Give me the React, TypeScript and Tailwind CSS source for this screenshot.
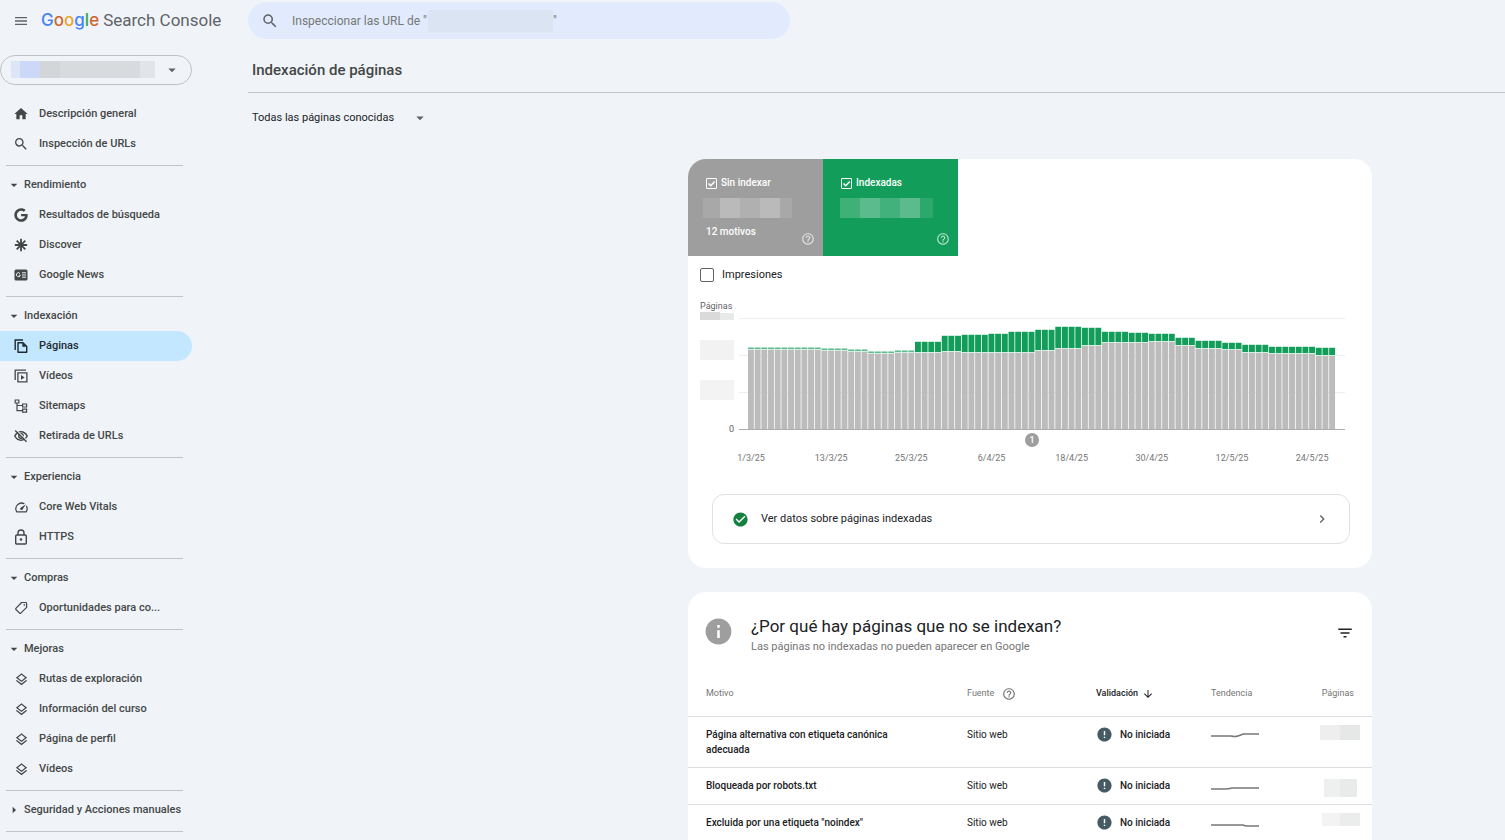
import type { ReactNode } from 'react';
import { FaGoogle } from 'react-icons/fa';
import {
  MdArrowDownward,
  MdArrowDropDown,
  MdArrowRight,
  MdCheckCircle,
  MdChevronRight,
  MdError,
  MdFilterList,
  MdHelpOutline,
  MdHome,
  MdInfo,
  MdMenu,
  MdOutlineLayers,
  MdOutlineSpeed,
  MdSearch,
} from 'react-icons/md';

function Svg({ children }: { children: ReactNode }) {
  return (
    <svg
      viewBox="0 0 14 14"
      className="size-[14px]"
      fill="none"
      stroke="currentColor"
      strokeWidth="1.3"
      aria-hidden="true"
    >
      {children}
    </svg>
  );
}

const DiscoverIcon = () => (
  <Svg>
    <path d="M7 .8v12.4M.8 7h12.4M2.7 2.7l8.6 8.6M11.3 2.7l-8.6 8.6" strokeWidth="1.8" />
  </Svg>
);

const NewsIcon = () => (
  <Svg>
    <rect x=".5" y="1.5" width="13" height="11" rx="1.5" fill="currentColor" stroke="none" />
    <path d="M6 5.6a2 2 0 1 0 .3 1.6H4.8M8 4.8h4M8 7h4M8 9.2h4" stroke="#f0f4f9" strokeWidth="1" />
  </Svg>
);

const PagesIcon = () => (
  <Svg>
    <path d="M1.2 11V1H9" strokeWidth="1.4" />
    <path d="M4 3.8h5l3.7 3.7v5.7H4z" strokeWidth="1.4" strokeLinejoin="round" />
    <path d="M8.3 3.8v4h4z" fill="currentColor" stroke="none" />
  </Svg>
);

const VideosIcon = () => (
  <Svg>
    <path d="M1.2 11V1.2H12M3.9 3.9h9v9h-9z" />
    <path d="M7 6l3.6 2.4L7 10.8z" fill="currentColor" stroke="none" />
  </Svg>
);

const SitemapIcon = () => (
  <Svg>
    <path d="M1.2 1h3.6v3H1.2zM8.6 5h4v3h-4zM8.6 10.2h4v3h-4zM3 4v7.7h5.6M3 6.5h5.6" strokeWidth="1.2" />
  </Svg>
);

const HiddenIcon = () => (
  <Svg>
    <path d="M.8 7Q3 2.8 7 2.8T13.2 7Q11 11.2 7 11.2T.8 7z" strokeWidth="1.5" />
    <circle cx="7" cy="7" r="2.2" strokeWidth="1.4" />
    <path d="M2.2.8l11 11" stroke="#f0f4f9" strokeWidth="1.2" />
    <path d="M1.2 1.4l11.4 11.4" strokeWidth="1.4" />
  </Svg>
);

const LockIcon = () => (
  <svg
    viewBox="0 0 14 16"
    className="h-4 w-[14px]"
    fill="none"
    stroke="currentColor"
    strokeWidth="1.4"
    aria-hidden="true"
  >
    <rect x="1.7" y="6" width="10.6" height="9" rx="1" />
    <path d="M4 6V4a3 3 0 0 1 6 0v2" />
    <circle cx="7" cy="10.5" r="1.3" fill="currentColor" stroke="none" />
  </svg>
);

const TagIcon = () => (
  <Svg>
    <path
      d="M7.6 1.5h4.2q.8 0 .8.8v4.1L6.8 12.2q-.6.5-1.2 0L1.9 8.5q-.5-.6 0-1.2z"
      strokeLinejoin="round"
      strokeWidth="1.2"
    />
    <circle cx="10.3" cy="3.9" r=".8" fill="currentColor" stroke="none" />
  </Svg>
);

type Item = { label: string; icon: ReactNode; active?: boolean };
type Group = { title?: string; closed?: boolean; items: Item[] };

const layers = <MdOutlineLayers className="size-[15px]" />;

const GROUPS: Group[] = [
  {
    items: [
      { label: 'Descripción general', icon: <MdHome className="size-4" /> },
      { label: 'Inspección de URLs', icon: <MdSearch className="size-4" /> },
    ],
  },
  {
    title: 'Rendimiento',
    items: [
      { label: 'Resultados de búsqueda', icon: <FaGoogle className="size-[14px]" /> },
      { label: 'Discover', icon: <DiscoverIcon /> },
      { label: 'Google News', icon: <NewsIcon /> },
    ],
  },
  {
    title: 'Indexación',
    items: [
      { label: 'Páginas', icon: <PagesIcon />, active: true },
      { label: 'Vídeos', icon: <VideosIcon /> },
      { label: 'Sitemaps', icon: <SitemapIcon /> },
      { label: 'Retirada de URLs', icon: <HiddenIcon /> },
    ],
  },
  {
    title: 'Experiencia',
    items: [
      { label: 'Core Web Vitals', icon: <MdOutlineSpeed className="size-[15px]" /> },
      { label: 'HTTPS', icon: <LockIcon /> },
    ],
  },
  {
    title: 'Compras',
    items: [{ label: 'Oportunidades para co...', icon: <TagIcon /> }],
  },
  {
    title: 'Mejoras',
    items: [
      { label: 'Rutas de exploración', icon: layers },
      { label: 'Información del curso', icon: layers },
      { label: 'Página de perfil', icon: layers },
      { label: 'Vídeos', icon: layers },
    ],
  },
  { title: 'Seguridad y Acciones manuales', closed: true, items: [] },
];

function Sidebar() {
  return (
    <aside className="w-[248px] shrink-0">
      <div className="flex h-[41px] items-center pl-[13px]">
        <button aria-label="Menú principal" className="text-[#5f6368]">
          <MdMenu className="size-4" />
        </button>
        <a href="#inicio" className="ml-3 flex items-center gap-1 text-[17px] text-[#5f6368]">
          <span className="font-['Inter',sans-serif] font-medium">
            <span className="text-[#4285f4]">G</span>
            <span className="text-[#d0662b]">o</span>
            <span className="text-[#eaa62c]">o</span>
            <span className="text-[#4285f4]">g</span>
            <span className="text-[#34a853]">l</span>
            <span className="text-[#d0662b]">e</span>
          </span>
          Search Console
        </a>
      </div>

      <button
        aria-label="Seleccionar propiedad"
        className="mt-[14px] flex h-[30px] w-48 items-center justify-between rounded-full border border-[#bfc2c4] px-[10px]"
      >
        <span className="mb-[2px] flex h-[17px]">
          <span className="w-[9px] bg-[#dde6f6]" />
          <span className="w-5 bg-[#cbd8f8]" />
          <span className="w-5 bg-[#d3d6d8]" />
          <span className="w-20 bg-[#d8dbde]" />
          <span className="w-[15px] bg-[#e1e4e8]" />
        </span>
        <MdArrowDropDown className="size-[18px] text-[#5f6368]" />
      </button>

      <nav className="mt-[14px] text-[11px] font-medium text-[#444746]">
        {GROUPS.map((g, i) => (
          <div key={i}>
            {g.title && (
              <button className="flex h-[30px] items-center pl-[6px] whitespace-nowrap">
                {g.closed ? (
                  <MdArrowRight className="size-4" />
                ) : (
                  <MdArrowDropDown className="size-4" />
                )}
                <span className="ml-[2px]">{g.title}</span>
              </button>
            )}
            {g.items.map((item) => (
              <a
                key={item.label}
                href="#seccion"
                className={
                  item.active
                    ? 'flex h-[30px] w-48 items-center rounded-r-full bg-[#c2e7ff] pl-[13px] text-[#1f2a30]'
                    : 'flex h-[30px] w-48 items-center pl-[13px]'
                }
              >
                <span className="flex w-4 justify-center">{item.icon}</span>
                <span className="ml-[10px] whitespace-nowrap">{item.label}</span>
              </a>
            ))}
            <div className="mt-[6px] mb-1 ml-[6px] w-[177px] border-t border-[#c0c4c7]" />
          </div>
        ))}
      </nav>
    </aside>
  );
}

function MetricTab({
  id,
  label,
  className,
  note,
  children,
}: {
  id: string;
  label: string;
  className: string;
  note?: string;
  children: ReactNode;
}) {
  return (
    <div className={`relative h-[97px] w-[135px] pt-[17px] pl-[18px] text-white ${className}`}>
      <label htmlFor={id} className="flex items-center gap-1 text-[10px] leading-[14px] font-medium">
        <span className="relative flex size-[11px]">
          <input
            id={id}
            type="checkbox"
            defaultChecked
            className="peer size-[11px] appearance-none rounded-[1px] border border-white"
          />
          <svg
            viewBox="0 0 11 11"
            className="pointer-events-none absolute inset-0 hidden peer-checked:block"
            fill="none"
            stroke="#fff"
            strokeWidth="1.5"
          >
            <path d="M2.5 5.5l2.2 2.2 4-4.2" />
          </svg>
        </span>
        {label}
      </label>
      <div className="mt-2 mb-[7px]">{children}</div>
      {note && <div className="text-[10px] leading-[14px] font-medium">{note}</div>}
      <button
        aria-label={`Ayuda: ${label}`}
        className="absolute right-2 bottom-[10px] text-white/70"
      >
        <MdHelpOutline className="size-[14px]" />
      </button>
    </div>
  );
}

// [days, top of the indexed bar, top of the non-indexed bar], measured in chart units
const RUNS = [
  [11, 48, 49],
  [4, 49, 50],
  [3, 50, 51],
  [4, 52, 53],
  [3, 51, 52],
  [4, 42, 52],
  [3, 36, 51],
  [4, 35, 52],
  [3, 34, 52],
  [4, 32, 52],
  [3, 30, 50],
  [4, 27, 48],
  [3, 28, 45],
  [4, 32, 42],
  [3, 33, 42],
  [4, 34, 41],
  [3, 38, 45],
  [4, 41, 48],
  [3, 43, 49],
  [4, 45, 52],
  [7, 47, 53],
  [3, 48, 55],
];

const BARS = RUNS.flatMap(([days, top, mid]) => Array.from({ length: days }, () => ({ top, mid })));
const STEP = 6.68;
const BASE = 130;
const DATES = ['1/3/25', '13/3/25', '25/3/25', '6/4/25', '18/4/25', '30/4/25', '12/5/25', '24/5/25'];

function Chart() {
  return (
    <svg
      viewBox="0 0 684 168"
      className="block w-full font-['Roboto',sans-serif]"
      role="img"
      aria-label="Páginas indexadas y sin indexar por día"
    >
      <text x="12" y="9" fontSize="9" fill="#5f6368">
        Páginas
      </text>
      <rect x="12" y="12" width="20" height="8" fill="#dadada" />
      <rect x="32" y="13" width="14" height="7" fill="#e8e9e9" />
      <rect x="12" y="40" width="34" height="20" fill="#f2f2f2" />
      <rect x="12" y="80" width="34" height="20" fill="#f3f3f3" />
      <text x="46" y="132" fontSize="9" fill="#5f6368" textAnchor="end">
        0
      </text>
      <path d="M51 18.5h606M51 55.5h606M51 92.5h606" stroke="#eeeeee" />
      {BARS.map((b, i) => {
        const x = 60 + i * STEP;
        const thin = b.mid - b.top < 2;
        return (
          <g key={i}>
            <rect x={x} y={b.top - 1} width="5.9" height="1" fill="#a9dcc2" opacity={thin ? 1 : 0.6} />
            <rect
              x={x}
              y={b.top}
              width="5.9"
              height={b.mid - b.top}
              fill={thin ? '#5fbb8f' : '#129e5a'}
            />
            <rect x={x} y={b.mid} width={STEP} height="1" fill="#d9eee3" />
            <rect x={x} y={b.mid + 1} width="5.9" height={BASE - b.mid - 1} fill="#bcbcbc" />
          </g>
        );
      })}
      <path d="M51 129.5h606" stroke="#adadad" />
      <circle cx="344" cy="140" r="7" fill="#9e9e9e" />
      <text x="344" y="143" fontSize="9" fontWeight="500" fill="#fff" textAnchor="middle">
        1
      </text>
      {DATES.map((d, i) => (
        <text key={d} x={63 + i * STEP * 12} y="161" fontSize="9" fill="#757575" textAnchor="middle">
          {d}
        </text>
      ))}
    </svg>
  );
}

const ROWS = [
  {
    reason: 'Página alternativa con etiqueta canónica adecuada',
    trend: 'M0 7h20q4 1 7 0t5-2h16',
    mask: (
      <div className="flex h-[15px] justify-end">
        <span className="w-5 bg-[#eeeeee]" />
        <span className="w-5 bg-[#e6e7e7]" />
      </div>
    ),
  },
  {
    reason: 'Bloqueada por robots.txt',
    trend: 'M0 9h13q5 0 8-1h27',
    mask: (
      <div className="mt-[3px] mr-[3px] flex h-[18px] justify-end">
        <span className="w-4 bg-[#eeefef]" />
        <span className="w-[17px] bg-[#e9ebea]" />
      </div>
    ),
  },
  {
    reason: 'Excluida por una etiqueta "noindex"',
    trend: 'M0 8h32q2 1 4 1h12',
    mask: (
      <div className="flex h-[13px] justify-end">
        <span className="w-[18px] bg-[#f3f3f3]" />
        <span className="w-5 bg-[#ebecec]" />
      </div>
    ),
  },
];

function ReasonsTable() {
  return (
    <table className="mt-[14px] w-full table-fixed text-left text-[10px] leading-[15px] text-[#202124]">
      <colgroup>
        <col className="w-[279px]" />
        <col className="w-[129px]" />
        <col className="w-[115px]" />
        <col className="w-[80px]" />
        <col />
      </colgroup>
      <thead>
        <tr className="h-[44px] border-b border-[#dcdddf] text-[9px] text-[#757575]">
          <th className="pl-[18px] font-normal">Motivo</th>
          <th className="font-normal">
            <span className="flex items-center gap-2">
              Fuente
              <MdHelpOutline className="size-[14px]" />
            </span>
          </th>
          <th className="font-medium text-[#202124]">
            <button className="flex items-center gap-1">
              Validación
              <MdArrowDownward className="size-[12px]" />
            </button>
          </th>
          <th className="font-normal">Tendencia</th>
          <th className="pr-[18px] text-right font-normal">Páginas</th>
        </tr>
      </thead>
      <tbody>
        {ROWS.map((r) => (
          <tr key={r.reason} className="h-[37px] border-b border-[#dcdddf] align-top">
            <td className="pt-[10px] pr-[60px] pb-[10px] pl-[18px] font-medium">{r.reason}</td>
            <td className="pt-[10px]">Sitio web</td>
            <td className="pt-[9px] font-medium">
              <span className="flex items-center gap-[7px]">
                <MdError className="size-[17px] text-[#455a64]" />
                No iniciada
              </span>
            </td>
            <td className="pt-3">
              <svg viewBox="0 0 48 11" className="h-[11px] w-12" fill="none" stroke="#777" strokeWidth="1.5">
                <path d={r.trend} />
              </svg>
            </td>
            <td className="pt-2 pr-3">{r.mask}</td>
          </tr>
        ))}
      </tbody>
    </table>
  );
}

export default function App() {
  return (
    <div className="flex h-screen overflow-hidden bg-[#f0f4f9] font-['Roboto',sans-serif] text-[#202124]">
      <Sidebar />

      <main className="min-w-0 flex-1">
        <div className="relative mt-[2px] flex h-[37px] w-full max-w-[542px] items-center rounded-full bg-[#e2ebfd] pl-[13px] text-[12px] text-[#747775]">
          <MdSearch className="size-[18px] text-[#5f6368]" />
          <input
            type="search"
            aria-label="Inspeccionar URL"
            placeholder={'Inspeccionar las URL de "'}
            className="ml-[13px] flex-1 outline-none placeholder:text-[#747775]"
          />
          <span className="pointer-events-none absolute left-[180px] flex items-center">
            <span className="h-[22px] w-[125px] bg-[#dbe4f3]" />
            "
          </span>
        </div>

        <h1 className="flex h-[54px] items-center border-b border-[#c0c4c7] pt-[9px] pl-1 text-[15px] font-medium text-[#444746]">
          Indexación de páginas
        </h1>

        <div className="relative mt-[14px] ml-1 flex h-[22px] w-[177px] items-center">
          <select
            aria-label="Filtro de páginas"
            className="w-full appearance-none bg-transparent text-[11px] outline-none"
          >
            <option>Todas las páginas conocidas</option>
          </select>
          <MdArrowDropDown className="pointer-events-none absolute right-0 size-[18px] text-[#5f6368]" />
        </div>

        <div className="mt-[30px] mr-[133px] ml-auto flex max-w-[684px] flex-col gap-6">
          <section className="overflow-hidden rounded-[18px] bg-white pb-6">
            <div className="flex">
              <MetricTab id="sin-indexar" label="Sin indexar" note="12 motivos" className="bg-[#9e9e9e]">
                <div className="-ml-[3px] flex h-[20px]">
                  <span className="w-[17px] bg-[#a8a8a9]" />
                  <span className="w-5 bg-[#bababa]" />
                  <span className="w-5 bg-[#b0b0b0]" />
                  <span className="w-5 bg-[#bababa]" />
                  <span className="w-3 bg-[#a8a8a9]" />
                </div>
              </MetricTab>
              <MetricTab id="indexadas" label="Indexadas" className="bg-[#129e5a]">
                <div className="-ml-px flex h-[20px]">
                  <span className="w-5 bg-[#40b079]" />
                  <span className="w-5 bg-[#5cbb8c]" />
                  <span className="w-5 bg-[#42b17b]" />
                  <span className="w-5 bg-[#5cbb8c]" />
                  <span className="w-[13px] bg-[#2da86d]" />
                </div>
              </MetricTab>
            </div>

            <label htmlFor="impresiones" className="mt-3 ml-3 flex w-fit items-center gap-2 text-[11px] leading-[14px]">
              <input
                id="impresiones"
                type="checkbox"
                className="size-[14px] appearance-none rounded-[2px] border border-[#5f6368] checked:bg-[#5f6368]"
              />
              Impresiones
            </label>

            <div className="mt-[18px]">
              <Chart />
            </div>

            <button className="mx-6 mt-[26px] flex h-[50px] w-[calc(100%-46px)] items-center rounded-[12px] border border-[#dfe0e1] px-[19px] text-[11px]">
              <MdCheckCircle className="size-[17px] text-[#12813e]" />
              <span className="ml-3">Ver datos sobre páginas indexadas</span>
              <MdChevronRight className="ml-auto size-4 text-[#5f6368]" />
            </button>
          </section>

          <section className="overflow-hidden rounded-[18px] bg-white pb-6">
            <div className="flex items-start pt-6 pr-[18px] pl-[15px]">
              <MdInfo className="size-[31px] text-[#9e9e9e]" />
              <div className="ml-[17px]">
                <h2 className="text-[17px] leading-5">¿Por qué hay páginas que no se indexan?</h2>
                <p className="text-[11px] leading-[22px] text-[#757575]">
                  Las páginas no indexadas no pueden aparecer en Google
                </p>
              </div>
              <button aria-label="Filtrar" className="mt-2 ml-auto">
                <MdFilterList className="size-[18px]" />
              </button>
            </div>
            <ReasonsTable />
          </section>
        </div>
      </main>
    </div>
  );
}
